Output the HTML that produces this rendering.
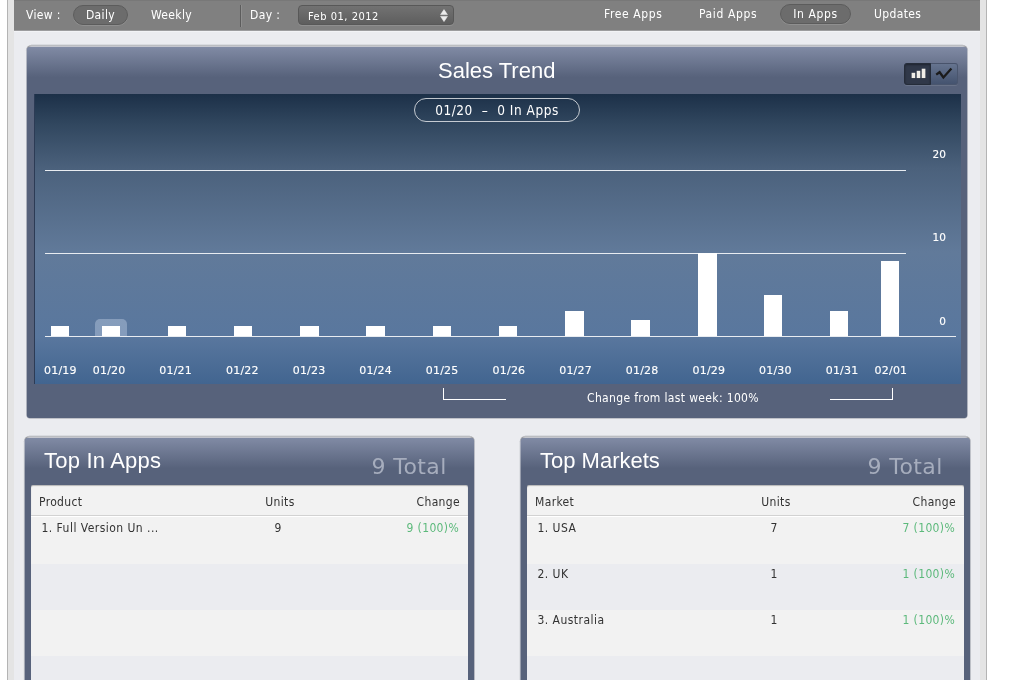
<!DOCTYPE html>
<html>
<head>
<meta charset="utf-8">
<title>Sales Trend</title>
<style>
html,body{margin:0;padding:0;background:#fff;}
body{width:1020px;height:680px;overflow:hidden;position:relative;font-family:"DejaVu Sans Condensed","DejaVu Sans","Liberation Sans",sans-serif;font-size:12px;letter-spacing:0.35px;color:#fff;}
.abs{position:absolute;}
#frame{left:7px;top:0;width:980px;height:680px;background:#e4e4e4;border-left:1px solid #b4b4b4;border-right:1px solid #b4b4b4;box-sizing:border-box;}
#content{left:14px;top:0;width:966px;height:680px;background:#ebecf0;}
#topbar{left:14px;top:0;width:966px;height:31px;background:#808080;border-top:1px solid #787878;border-bottom:1px solid #9c9c9e;box-sizing:border-box;box-shadow:0 1px 0 #f2f3f6;}
.t{position:absolute;white-space:nowrap;line-height:14px;}
.pill{position:absolute;box-sizing:border-box;height:20px;top:5px;border-radius:10px;background:#6c6c6c;border:1px solid #5c5c5c;box-shadow:0 1px 0 rgba(255,255,255,0.12);text-align:center;line-height:17px;}
.panel{position:absolute;box-sizing:border-box;border-radius:5px 5px 4px 4px;background:linear-gradient(#cdd1dc 0px,#cdd1dc 1px,#808aa4 1px,#57627b 31px);border-top:1px solid #8e8e90;box-shadow:0 0 0 0.5px rgba(120,124,135,0.55);}
.h{font-family:"Liberation Sans",sans-serif;font-size:22px;letter-spacing:0;line-height:26px;position:absolute;white-space:nowrap;color:#fff;}

.bar{position:absolute;background:#fff;}
.yl{font-family:"DejaVu Sans",sans-serif;font-size:10.5px;letter-spacing:0;-webkit-text-stroke:0.15px #fff;}
.xl{position:absolute;top:363.6px;font-family:"DejaVu Sans",sans-serif;font-size:11px;line-height:14px;letter-spacing:0.2px;white-space:nowrap;-webkit-text-stroke:0.15px #fff;}
.tbl{position:absolute;top:485px;width:437px;height:200px;background:#f2f2f2;border-radius:2px 2px 0 0;color:#333;overflow:hidden;box-shadow:inset 0 1px 1px rgba(0,0,0,0.25);}
.th{position:relative;height:30px;border-bottom:1px solid #d2d2d2;}
.tr{position:relative;height:46px;background:#f2f2f2;}
.tr.first{height:47px;border-top:1px solid #fff;}
.tr.alt{background:#ebecf0;}
.tbl span{position:absolute;white-space:nowrap;line-height:14px;}
.th span{top:10px;}
.tr span{top:3px;}
.tr.first span{top:4px;}
.th .c1{left:8px;}
.tr .c1{left:10.5px;letter-spacing:0.46px;}
.th .c2{left:219px;width:60px;text-align:center;}
.tr .c2{left:217px;width:60px;text-align:center;}
.th .c3{right:8px;}
.tr .c3{right:9px;color:#5cb97b;}
</style>
</head>
<body>
<div id="root" style="position:absolute;left:0;top:0;width:1020px;height:680px;will-change:transform;">
<div id="frame" class="abs"></div>
<div id="content" class="abs"></div>
<div id="topbar" class="abs"></div>

<div class="t" style="left:26px;top:8px;">View :</div>
<div class="pill" style="left:73px;width:55px;line-height:19px;">Daily</div>
<div class="t" style="left:151px;top:8px;">Weekly</div>
<div class="abs" style="left:240px;top:5px;width:1px;height:22px;background:#5c5c5c;"></div>
<div class="abs" style="left:241px;top:5px;width:1px;height:22px;background:#8e8e8e;"></div>
<div class="t" style="left:250px;top:8px;">Day :</div>
<div class="abs" id="sel" style="left:298px;top:5px;width:156px;height:20px;box-sizing:border-box;border-radius:4px;border:1px solid #585858;background:linear-gradient(#727272,#5e5e5e);box-shadow:0 1px 0 rgba(255,255,255,0.12);"></div>
<div class="t" style="left:308px;top:10px;font-size:11px;letter-spacing:0.52px;">Feb 01, 2012</div>
<svg class="abs" style="left:440px;top:9px;" width="8" height="13" viewBox="0 0 8 13"><path d="M4 0.6 L7.4 5.6 L0.6 5.6 Z M4 12.6 L7.4 7.4 L0.6 7.4 Z" fill="#ededed" stroke="#ededed" stroke-width="0.6" stroke-linejoin="round"/></svg>

<div class="t" style="left:604px;top:7px;letter-spacing:0.62px;">Free Apps</div>
<div class="t" style="left:699px;top:7px;letter-spacing:0.62px;">Paid Apps</div>
<div class="pill" style="left:780px;width:71px;top:4px;line-height:19px;letter-spacing:0.6px;">In Apps</div>
<div class="t" style="left:874px;top:7px;">Updates</div>

<!-- Sales trend panel -->
<div class="panel" style="left:26px;top:45px;width:941px;height:373px;transform:translate(0.5px,0.3px);"></div>
<div class="h" style="left:438px;top:58px;">Sales Trend</div>

<!-- toggle -->
<div class="abs" style="left:904px;top:63px;width:54px;height:22px;border-radius:3px;background:linear-gradient(#66748f,#44536f);border:1px solid #4a566e;border-top-color:#48536b;box-sizing:border-box;box-shadow:0 1px 0 rgba(255,255,255,0.10);"></div>
<div class="abs" style="left:904px;top:63px;width:27px;height:22px;border-radius:3px 0 0 3px;background:#303849;border:1px solid #252c39;box-sizing:border-box;box-shadow:inset 0 1px 2px rgba(0,0,0,0.35);"></div>
<svg class="abs" style="left:896px;top:56px;" width="70" height="36" viewBox="0 0 70 36">
<g fill="#1f2531" opacity="0.6"><rect x="15.6" y="17.3" width="3.6" height="5.6"/><rect x="20.7" y="15.3" width="3.6" height="7.6"/><rect x="25.7" y="13.2" width="3.7" height="9.7"/></g>
<g fill="#f1eee8"><rect x="15.6" y="16.8" width="3.6" height="5.3"/><rect x="20.7" y="14.8" width="3.6" height="7.3"/><rect x="25.7" y="12.7" width="3.7" height="9.4"/></g>
<path d="M40.2 18.6 L43.6 16.2 L47.4 21.4 L55.4 12.6" stroke="#1b1b1b" stroke-width="2.3" fill="none" stroke-linejoin="miter"/>
</svg>

<!-- chart -->
<div class="abs" id="chart" style="left:34px;top:94px;width:927px;height:290px;background:linear-gradient(#1c3048 0%,#31475f 10.4%,#4b617c 25.6%,#617a9a 54.7%,#59779e 83.7%,#426590 100%);border-left:1px solid #2c3b55;box-sizing:border-box;"></div>
<div class="abs" style="left:414px;top:98px;width:166px;height:24px;border:1px solid rgba(255,255,255,0.72);border-radius:12px;box-sizing:border-box;text-align:center;line-height:22px;font-size:13.5px;letter-spacing:0.55px;">01/20 &nbsp;–&nbsp; 0 In Apps</div>

<div class="abs" style="left:45px;top:170px;width:861px;height:1px;background:#e8ecf1;"></div>
<div class="abs" style="left:45px;top:253px;width:861px;height:1px;background:#e8ecf1;"></div>
<div class="abs" style="left:45px;top:336px;width:911px;height:1px;background:#e8ecf1;"></div>

<div class="t yl" style="left:932.6px;top:147px;">20</div>
<div class="t yl" style="left:932.6px;top:230px;">10</div>
<div class="t yl" style="left:939.3px;top:314px;">0</div>

<div class="abs" style="left:95px;top:319px;width:32px;height:17px;border-radius:5px 5px 0 0;background:rgba(205,218,236,0.38);"></div>
<div class="bar" style="left:51px;top:326px;width:18px;height:10px;"></div>
<div class="bar" style="left:102px;top:326px;width:18px;height:10px;"></div>
<div class="bar" style="left:168px;top:326px;width:18px;height:10px;"></div>
<div class="bar" style="left:234px;top:326px;width:18px;height:10px;"></div>
<div class="bar" style="left:300px;top:326px;width:19px;height:10px;"></div>
<div class="bar" style="left:366px;top:326px;width:19px;height:10px;"></div>
<div class="bar" style="left:433px;top:326px;width:18px;height:10px;"></div>
<div class="bar" style="left:499px;top:326px;width:18px;height:10px;"></div>
<div class="bar" style="left:565px;top:311px;width:19px;height:25px;"></div>
<div class="bar" style="left:631px;top:320px;width:19px;height:16px;"></div>
<div class="bar" style="left:698px;top:253px;width:19px;height:83px;"></div>
<div class="bar" style="left:764px;top:295px;width:18px;height:41px;"></div>
<div class="bar" style="left:830px;top:311px;width:18px;height:25px;"></div>
<div class="bar" style="left:881px;top:261px;width:18px;height:75px;"></div>
<div class="xl" style="left:44px;">01/19</div>
<div class="xl" style="left:92.8px;">01/20</div>
<div class="xl" style="left:159.3px;">01/21</div>
<div class="xl" style="left:226px;">01/22</div>
<div class="xl" style="left:292.7px;">01/23</div>
<div class="xl" style="left:359.2px;">01/24</div>
<div class="xl" style="left:425.8px;">01/25</div>
<div class="xl" style="left:492.6px;">01/26</div>
<div class="xl" style="left:559.2px;">01/27</div>
<div class="xl" style="left:625.8px;">01/28</div>
<div class="xl" style="left:692.5px;">01/29</div>
<div class="xl" style="left:759px;">01/30</div>
<div class="xl" style="left:825.7px;">01/31</div>
<div class="xl" style="left:874.6px;">02/01</div>

<div class="t" style="left:587px;top:391px;">Change from last week: 100%</div>
<div class="abs" style="left:443px;top:388px;width:62px;height:11px;border-left:1px solid #fff;border-bottom:1px solid #fff;"></div>
<div class="abs" style="left:830px;top:388px;width:62px;height:11px;border-right:1px solid #fff;border-bottom:1px solid #fff;"></div>

<!-- bottom panels -->
<div class="panel" style="left:24px;top:436px;width:450px;height:260px;transform:translate(0.4px,0.3px);"></div>
<div class="h" style="left:44px;top:448px;letter-spacing:0.2px;">Top In Apps</div>
<div class="t" style="left:371.5px;top:453.5px;font-family:'DejaVu Sans',sans-serif;font-size:22px;line-height:26px;color:#a6adbd;letter-spacing:0.4px;">9 Total</div>
<div class="tbl" style="left:31px;">
<div class="th"><span class="c1">Product</span><span class="c2">Units</span><span class="c3">Change</span></div>
<div class="tr first"><span class="c1">1. Full Version Un ...</span><span class="c2">9</span><span class="c3">9 (100)%</span></div>
<div class="tr alt"></div>
<div class="tr"></div>
<div class="tr alt"></div>
</div>

<div class="panel" style="left:520px;top:436px;width:450px;height:260px;transform:translate(0.3px,0.3px);"></div>
<div class="h" style="left:540px;top:448px;">Top Markets</div>
<div class="t" style="left:867.5px;top:453.5px;font-family:'DejaVu Sans',sans-serif;font-size:22px;line-height:26px;color:#a6adbd;letter-spacing:0.4px;">9 Total</div>
<div class="tbl" style="left:527px;">
<div class="th"><span class="c1">Market</span><span class="c2">Units</span><span class="c3">Change</span></div>
<div class="tr first"><span class="c1">1. USA</span><span class="c2">7</span><span class="c3">7 (100)%</span></div>
<div class="tr alt"><span class="c1">2. UK</span><span class="c2">1</span><span class="c3">1 (100)%</span></div>
<div class="tr"><span class="c1">3. Australia</span><span class="c2">1</span><span class="c3">1 (100)%</span></div>
<div class="tr alt"></div>
</div>

</div>
</body>
</html>
